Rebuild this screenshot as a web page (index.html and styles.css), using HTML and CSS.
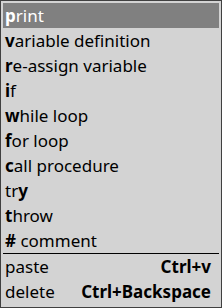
FILE: index.html
```html
<!DOCTYPE html>
<html lang="en">
  <head>
    <meta charset="UTF-8" />
    <title>Insert menu</title>
    <link rel="stylesheet" href="styles.css">
  </head>
  <body>
    <div class="menu">
      <div class="item selected"><b>p</b>rint</div>
      <div class="item"><b>v</b>ariable definition</div>
      <div class="item"><b>r</b>e-assign variable</div>
      <div class="item"><b>i</b>f</div>
      <div class="item"><b>w</b>hile loop</div>
      <div class="item"><b>f</b>or loop</div>
      <div class="item"><b>c</b>all procedure</div>
      <div class="item">tr<b>y</b></div>
      <div class="item"><b>t</b>hrow</div>
      <div class="item"><b>#</b> comment</div>
      <div class="separator"></div>
      <div class="item action"><span>paste</span><b>Ctrl+v</b></div>
      <div class="item action"><span>delete</span><b>Ctrl+Backspace</b></div>
    </div>
  </body>
</html>
```
FILE: styles.css
```css
/* General Styles */
body {
  margin: 0;
  padding: 0;
  font-family: "Noto Sans", sans-serif;
}
.menu {
  box-sizing: border-box;
  width: 222px;
  height: 308px;
  padding: 2px;
  border: 1px solid #404040;
  background-color: #d3d3d3;
}
.item {
  height: 25px;
  line-height: 25px;
  padding: 0 8px 0 2px;
  font-size: 17px;
  color: #000;
  white-space: nowrap;
}
.item b {
  font-weight: bold;
}
.selected {
  background-color: #808080;
  color: #fff;
}
.separator {
  height: 1px;
  background-color: #000;
}
.action {
  display: flex;
  justify-content: space-between;
}
```
